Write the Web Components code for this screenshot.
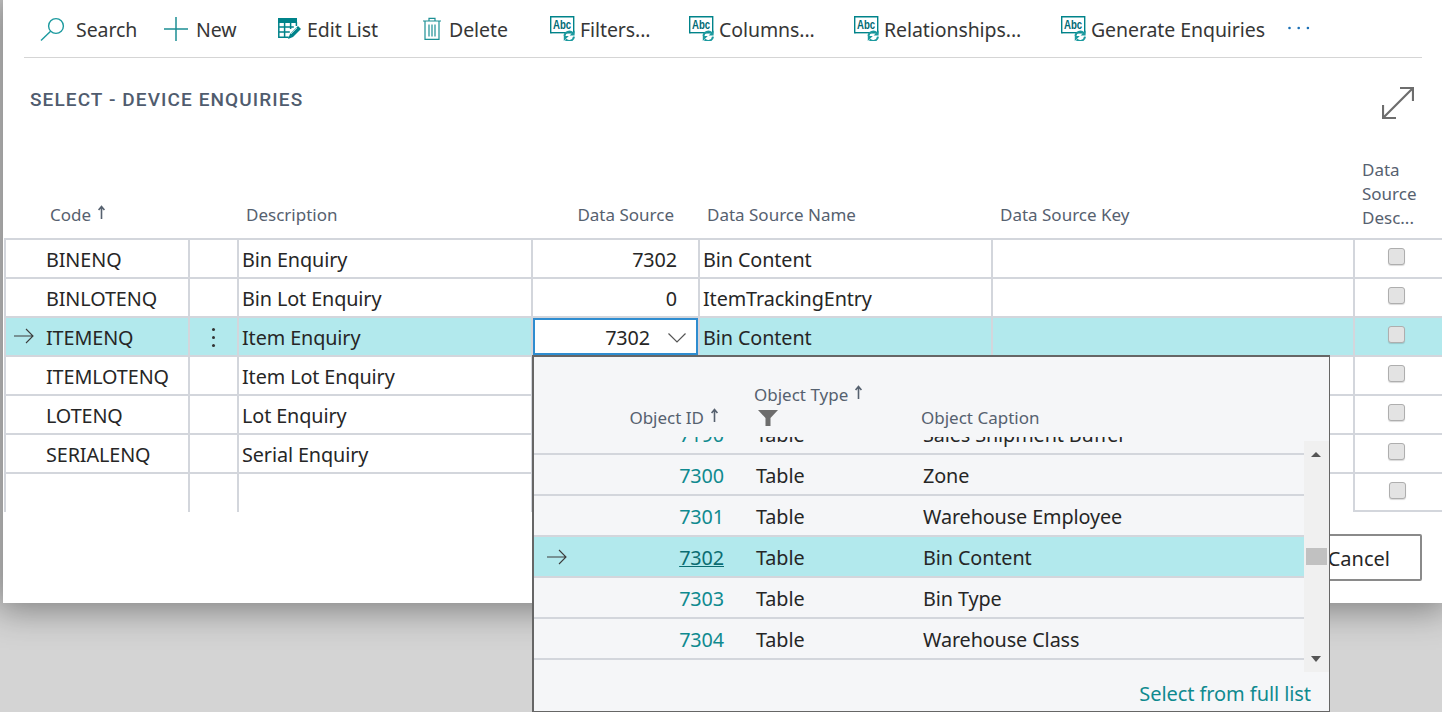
<!DOCTYPE html>
<html>
<head>
<meta charset="utf-8">
<style>
  html, body { margin:0; height:100%; overflow:hidden; }
  body { background:#d4d4d4; font-family:"Noto Sans","Open Sans",sans-serif; }
</style>
</head>
<body>
<select-dialog>
  <command-bar slot="bar">
    <bar-button icon="search" width="124" gap="10">Search</bar-button>
    <bar-button icon="plus" width="114" gap="8">New</bar-button>
    <bar-button icon="edit" width="145" gap="5">Edit List</bar-button>
    <bar-button icon="trash" width="127" gap="7">Delete</bar-button>
    <bar-button icon="abc" width="139" gap="5">Filters...</bar-button>
    <bar-button icon="abc" width="165" gap="5">Columns...</bar-button>
    <bar-button icon="abc" width="207" gap="5">Relationships...</bar-button>
    <bar-button icon="abc" width="216" gap="5">Generate Enquiries</bar-button>
  </command-bar>
  <enquiry-grid slot="grid"></enquiry-grid>
</select-dialog>
<lookup-popup></lookup-popup>

<script>
  const icons = {
    search: `<svg width="26" height="26" viewBox="0 0 26 26" fill="none" stroke="#1c9a9f" stroke-width="1.4"><circle cx="16" cy="10" r="7.4"/><path d="M10.6 15.2 1 24.6"/></svg>`,
    plus: `<svg width="24" height="24" viewBox="0 0 24 24" stroke="#1c8f94" stroke-width="1.5"><path d="M12 0v24M0 12h24"/></svg>`,
    edit: `<svg width="24" height="24" viewBox="0 0 24 24" fill="none"><path d="M0 1h19v5H0z" fill="#00838a"/><path d="M.8 5v15.2h10M6.6 6v14M12.6 6v6M.8 10h15M.8 15h11M18.4 5v4" stroke="#00838a" stroke-width="1.5"/><path d="M10 22l2-5 8-8 3 3-8 8z" fill="#00838a"/><path d="M13 17l6-6" stroke="#9fd3d5"/></svg>`,
    trash: `<svg width="20" height="24" viewBox="0 0 20 24" fill="none" stroke="#1c8f94" stroke-width="1.2" style="margin-left:-1px"><path d="M1 4h18M3 4v18.4h14V4M7 4V1.4h6V4M7 7.5v12M10 7.5v12M13 7.5v12"/></svg>`,
    abc: `<svg width="25" height="25" viewBox="0 0 25 25" fill="none"><path d="M.7.7h23v16H.7z" stroke="#00838a" stroke-width="1.4"/><path d="M2 17h12v1H2z" fill="#9fcfd1"/><text x="3" y="13" font-family="Liberation Sans" font-weight="700" font-size="12.5" fill="#006a74" textLength="18" lengthAdjust="spacingAndGlyphs">Abc</text><path d="M14.4 20a5 5 0 0 1 8.4-3M24 20.6a5 5 0 0 1-8.4 3" stroke="#1c9a9f" stroke-width="2"/><path d="M24.6 14.4v5h-5zM13.8 25v-5h5z" fill="#1c9a9f"/></svg>`
  };

  class BarButton extends HTMLElement {
    constructor() {
      super();
      const shadow = this.attachShadow({mode: 'open'});
      shadow.innerHTML = `
      <style>
        :host { display:flex; align-items:center; flex:none; font-size:19.5px; color:#363636; box-sizing:border-box; letter-spacing:-.08px; white-space:nowrap; }
        span { display:flex; }
        .t { padding-top:2px; }
      </style>
      <span>${icons[this.getAttribute('icon')]}</span><span class="t"><slot></slot></span>`;
      this.style.width = `${this.getAttribute('width')}px`;
      this.style.gap = `${this.getAttribute('gap')}px`;
    }
  }
  customElements.define('bar-button', BarButton);

  class CommandBar extends HTMLElement {
    constructor() {
      super();
      this.attachShadow({mode: 'open'}).innerHTML = `
      <style>
        :host { display:flex; align-items:center; height:57px; margin:0 20px 0 21px; padding-left:16px; border-bottom:1px solid #d5d5d5; }
        svg { margin-left:11px; flex:none; margin-top:-1px; }
      </style>
      <slot></slot>
      <svg width="22" height="4" viewBox="0 0 22 4" fill="#1a6fb5"><circle cx="1.5" cy="2" r="1.3"/><circle cx="10.7" cy="2" r="1.3"/><circle cx="19.9" cy="2" r="1.3"/></svg>`;
    }
  }
  customElements.define('command-bar', CommandBar);

  class SelectDialog extends HTMLElement {
    constructor() {
      super();
      this.attachShadow({mode: 'open'}).innerHTML = `
      <style>
        :host { display:flex; flex-direction:column; box-sizing:border-box; height:603px; margin-left:3px; background:#fff; box-shadow:0 0 34px 6px rgba(0,0,0,.42); position:relative; }
        header { display:flex; justify-content:space-between; align-items:flex-start; height:88px; margin:0 28px 0 27px; flex:none; }
        h1 { margin:30px 0 0; font:500 19px Roboto,sans-serif; letter-spacing:1.1px; color:#505c6e; }
        svg { margin-top:29px; }
        footer { display:flex; justify-content:flex-end; padding:22px 20px 0 0; }
        button { width:116px; height:47px; border:2px solid #8a8a8a; border-radius:2px; background:#fff; font:20px "Noto Sans",sans-serif; color:#262626; text-align:right; padding:2px 30px 0 0; }
      </style>
      <slot name="bar"></slot>
      <header>
        <h1>SELECT - DEVICE ENQUIRIES</h1>
        <svg width="32" height="32" viewBox="0 0 32 32" fill="none" stroke="#6d6d6d" stroke-width="2.2"><path d="M1 31 31 1M18 1h13v13M1 18v13h13"/></svg>
      </header>
      <slot name="grid"></slot>
      <footer><button>Cancel</button></footer>`;
    }
  }
  customElements.define('select-dialog', SelectDialog);

  const arrow = `<svg width="20" height="16" viewBox="0 0 20 16" fill="none" stroke="#3c3c3c" stroke-width="1.1"><path d="M0 8h19M12 1l7 7-7 7"/></svg>`;
  const sortUp = `<svg width="9" height="14" viewBox="0 0 9 14" fill="none" stroke="#56616f" stroke-width="1.6" style="margin-left:6px;vertical-align:2px"><path d="M4.5 14V1.5M1.6 5l2.9-3.5L7.4 5"/></svg>`;

  class EnquiryGrid extends HTMLElement {
    constructor() {
      super();
      const rows = [
        ['BINENQ','Bin Enquiry','7302','Bin Content'],
        ['BINLOTENQ','Bin Lot Enquiry','0','ItemTrackingEntry'],
        ['ITEMENQ','Item Enquiry','7302','Bin Content'],
        ['ITEMLOTENQ','Item Lot Enquiry','',''],
        ['LOTENQ','Lot Enquiry','',''],
        ['SERIALENQ','Serial Enquiry','',''],
        ['','','','']
      ];
      const body = rows.map((r, i) => {
        const sel = i === 2;
        const cls = sel ? ' sel' : '';
        return `
        <div class="c code${cls}">${sel ? '<i class="arrow">' + arrow + '</i>' : ''}${r[0]}</div>
        <div class="c dots${cls}">${sel ? '<span></span>' : ''}</div>
        <div class="c${cls}">${r[1]}</div>
        <div class="c num${cls}">${sel ? '<div class="edit">7302<svg width="18" height="10" viewBox="0 0 18 10" fill="none" stroke="#555" stroke-width="1.2"><path d="M.5.5 9 9l8.5-8.5"/></svg></div>' : r[2]}</div>
        <div class="c${cls}">${r[3]}</div>
        <div class="c${cls}"></div>
        <div class="c box${cls}"><u></u></div>`;
      }).join('');
      this.attachShadow({mode: 'open'}).innerHTML = `
      <style>
        :host { display:grid; grid-template-columns:186px 49px 294px 167px 293px 362px 88px; grid-template-rows:92px repeat(6,39px) 40px; margin-left:1px; font-size:19.8px; color:#262626; letter-spacing:-.1px; }
        .h { font-size:17px; color:#56616f; align-self:end; padding-bottom:11px; letter-spacing:0; white-space:nowrap; line-height:24px; }
        .c { box-sizing:border-box; border-top:2px solid #d3d6dc; border-right:2px solid #d3d6dc; display:flex; align-items:center; padding:2px 3px 0; white-space:nowrap; position:relative; }
        .first { border-left:2px solid #d3d6dc; }
        .code { padding-left:40px; }
        .num { justify-content:flex-end; padding-right:21px; }
        .sel { background:#b2e9ed; }
        .arrow { position:absolute; left:8px; top:10px; display:flex; }
        .dots span { width:3px; height:3px; background:#333; border-radius:50%; margin:auto; box-shadow:0 -8px #333, 0 8px #333; }
        .edit { position:absolute; left:0; right:0; top:0; bottom:0; background:#fff; border:2px solid #2f8dd0; display:flex; align-items:center; justify-content:flex-end; padding:2px 10px 0 0; gap:18px; }
        .box { justify-content:center; border-right:none; padding:0 8px 4px 3px; }
        .box u { width:17px; height:17px; box-sizing:border-box; background:#e3e3e3; border:1.5px solid #aeaeae; border-radius:3px; box-shadow:0 1px 1px rgba(0,0,0,.15); }
        .endc { border-bottom:2px solid #d3d6dc; border-left:2px solid #d3d6dc; margin-left:-2px; padding-left:5px; }
      </style>
      <div class="h" style="padding-left:46px">Code${sortUp}</div>
      <div class="h"></div>
      <div class="h" style="padding-left:7px">Description</div>
      <div class="h" style="text-align:right;padding-right:26px">Data Source</div>
      <div class="h" style="padding-left:7px">Data Source Name</div>
      <div class="h" style="padding-left:7px">Data Source Key</div>
      <div class="h" style="padding:0 0 8px 7px">Data<br>Source<br>Desc...</div>
      ${body}`;
      const cells = this.shadowRoot.querySelectorAll('.c');
      cells.forEach((c, i) => { if (i % 7 === 0) c.classList.add('first'); });
      // only the checkbox cell of the empty row is closed at the bottom
      cells[cells.length - 1].classList.add('endc');
    }
  }
  customElements.define('enquiry-grid', EnquiryGrid);

  class LookupRow extends HTMLElement {
    constructor() {
      super();
      const sel = this.hasAttribute('selected');
      this.attachShadow({mode: 'open'}).innerHTML = `
      <style>
        :host { display:grid; grid-template-columns:190px 199px 1fr; align-items:center; height:41px; box-sizing:border-box; padding-top:2px; border-bottom:2px solid #d3d6dc; font-size:19.8px; color:#262626; letter-spacing:-.1px; position:relative; white-space:nowrap; ${sel ? 'background:#b2e9ed;' : ''} }
        a { text-align:right; color:#0f8a8f; ${sel ? 'text-decoration:underline;color:#0b6d72;' : ''} }
        .t { padding-left:32px; }
        i { position:absolute; left:13px; top:12px; display:flex; }
      </style>
      ${sel ? '<i>' + arrow + '</i>' : ''}
      <a>${this.getAttribute('id-no')}</a><span class="t">Table</span><span><slot></slot></span>`;
    }
  }
  customElements.define('lookup-row', LookupRow);

  class LookupPopup extends HTMLElement {
    constructor() {
      super();
      this.attachShadow({mode: 'open'}).innerHTML = `
      <style>
        :host { position:absolute; left:532px; top:355px; width:798px; height:357px; box-sizing:border-box; background:#f5f6f8; border:2px solid #666; border-right-width:1px; border-bottom-width:1px; display:flex; flex-direction:column; font-size:17px; color:#56616f; }
        .head { height:80px; flex:none; display:grid; grid-template-columns:185px 168px 1fr; }
        .head div { white-space:nowrap; line-height:24px; }
        .id { text-align:right; padding-top:49px; }
        .ty { padding:26px 0 0 35px; }
        .ty svg.f { display:block; margin:3px 0 0 4px; vertical-align:baseline; }
        .ca { padding:49px 0 0 34px; }
        .mid { flex:none; height:235px; display:flex; }
        .rows { flex:1; overflow:hidden; min-width:0; }
        .rows .top { margin-top:-23px; }
        .scroll { width:25px; flex:none; margin-top:4px; background:#f0f0f0; position:relative; }
        .scroll b { position:absolute; left:7px; border-left:5.5px solid transparent; border-right:5.5px solid transparent; }
        .up { top:11px; border-bottom:5px solid #555; }
        .down { bottom:10px; border-top:6px solid #555; }
        .thumb { position:absolute; left:2px; width:21px; top:107px; height:17px; background:#c1c1c1; }
        .foot { flex:1; text-align:right; font-size:20px; color:#0f8a8f; padding:8px 18px 0 0; letter-spacing:-.08px; }
      </style>
      <div class="head">
        <div class="id">Object ID${sortUp}</div>
        <div class="ty">Object Type${sortUp}<svg class="f" width="20" height="16" viewBox="0 0 20 16" fill="#6d6d6d"><path d="M0 0h20L12.5 8v8h-5V8z"/></svg></div>
        <div class="ca">Object Caption</div>
      </div>
      <div class="mid">
        <div class="rows">
          <lookup-row class="top" id-no="7190">Sales Shipment Buffer</lookup-row>
          <lookup-row id-no="7300">Zone</lookup-row>
          <lookup-row id-no="7301">Warehouse Employee</lookup-row>
          <lookup-row id-no="7302" selected>Bin Content</lookup-row>
          <lookup-row id-no="7303">Bin Type</lookup-row>
          <lookup-row id-no="7304">Warehouse Class</lookup-row>
        </div>
        <div class="scroll"><b class="up"></b><div class="thumb"></div><b class="down"></b></div>
      </div>
      <div class="foot">Select from full list</div>`;
    }
  }
  customElements.define('lookup-popup', LookupPopup);
</script>
</body>
</html>
